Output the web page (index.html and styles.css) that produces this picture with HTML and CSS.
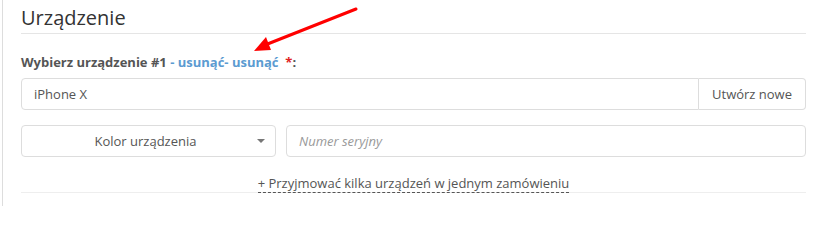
FILE: index.html
```html
<!DOCTYPE html>
<html lang="pl">
<head>
<meta charset="utf-8">
<link rel="stylesheet" href="styles.css">
</head>
<body>
<div class="panel">
  <h2 class="title">Urządzenie</h2>
  <div class="field">
    <label class="label">Wybierz urządzenie #1 <a class="link" href="#">- usunąć</a><a class="link" href="#">- usunąć</a>&nbsp; <span class="req">*</span>:</label>
    <div class="input-group">
      <div class="control">iPhone X</div>
      <button class="addon">Utwórz nowe</button>
    </div>
  </div>
  <div class="row">
    <div class="select">
      <span class="select-text">Kolor urządzenia</span>
      <span class="caret"></span>
    </div>
    <div class="control placeholder">Numer seryjny</div>
  </div>
  <div class="more">
    <a class="more-link" href="#">+ Przyjmować kilka urządzeń w jednym zamówieniu</a>
  </div>
  <svg class="arrow" width="120" height="60" viewBox="0 0 120 60">
    <line x1="113" y1="8" x2="22" y2="44" stroke="#f00" stroke-width="3" stroke-linecap="round"/>
    <polygon points="11,50 23,36 28,49" fill="#f00"/>
  </svg>
</div>
</body>
</html>
```
FILE: styles.css
```css
html, body {
  margin: 0;
  padding: 0;
  background: #fff;
}
body {
  font-family: "Open Sans", "Liberation Sans", sans-serif;
  font-size: 13px;
  color: #555;
}
.panel {
  position: relative;
  margin-left: 2px;
  border-left: 1px solid #ddd;
  padding: 0 18px 0 18px;
  height: 206px;
  box-sizing: border-box;
}
.title {
  margin: 0;
  padding-top: 3px;
  font-size: 20px;
  font-weight: 400;
  line-height: 30px;
  color: #333;
  border-bottom: 1px solid #e5e5e5;
  height: 34px;
  box-sizing: border-box;
}
.field {
  padding-top: 19px;
}
.label {
  display: block;
  font-weight: 700;
  line-height: 18px;
  margin-bottom: 7px;
  color: #555;
}
.link {
  color: #5b9bd1;
  text-decoration: none;
}
.req {
  color: #e02222;
}
.input-group {
  display: flex;
  height: 32px;
}
.control {
  flex: 1;
  border: 1px solid #ddd;
  border-radius: 4px;
  height: 32px;
  box-sizing: border-box;
  padding: 0 12px;
  line-height: 30px;
  color: #555;
}
.input-group .control {
  border-radius: 4px 0 0 4px;
}
.addon {
  font: inherit;
  color: #555;
  background: #fff;
  border: 1px solid #ddd;
  border-left: 0;
  border-radius: 0 4px 4px 0;
  padding: 0 13px;
  height: 32px;
  cursor: pointer;
}
.row {
  display: grid;
  grid-template-columns: 255px 1fr;
  column-gap: 10px;
  margin-top: 15px;
}
.select {
  display: flex;
  align-items: center;
  border: 1px solid #ddd;
  border-radius: 4px;
  height: 32px;
  box-sizing: border-box;
  padding: 0 10px 0 12px;
}
.select-text {
  flex: 1;
  text-align: center;
  color: #555;
}
.caret {
  width: 0;
  height: 0;
  border-left: 4px solid transparent;
  border-right: 4px solid transparent;
  border-top: 4px solid #777;
}
.placeholder {
  font-style: italic;
  color: #999;
}
.more {
  margin-top: 17px;
  border-bottom: 1px solid #eee;
  text-align: center;
  height: 18px;
  line-height: 18px;
}
.more-link {
  color: #555;
  text-decoration: none;
  border-bottom: 1px dashed #555;
  padding-bottom: 0;
}
.arrow {
  position: absolute;
  left: 240px;
  top: 1px;
}
```
